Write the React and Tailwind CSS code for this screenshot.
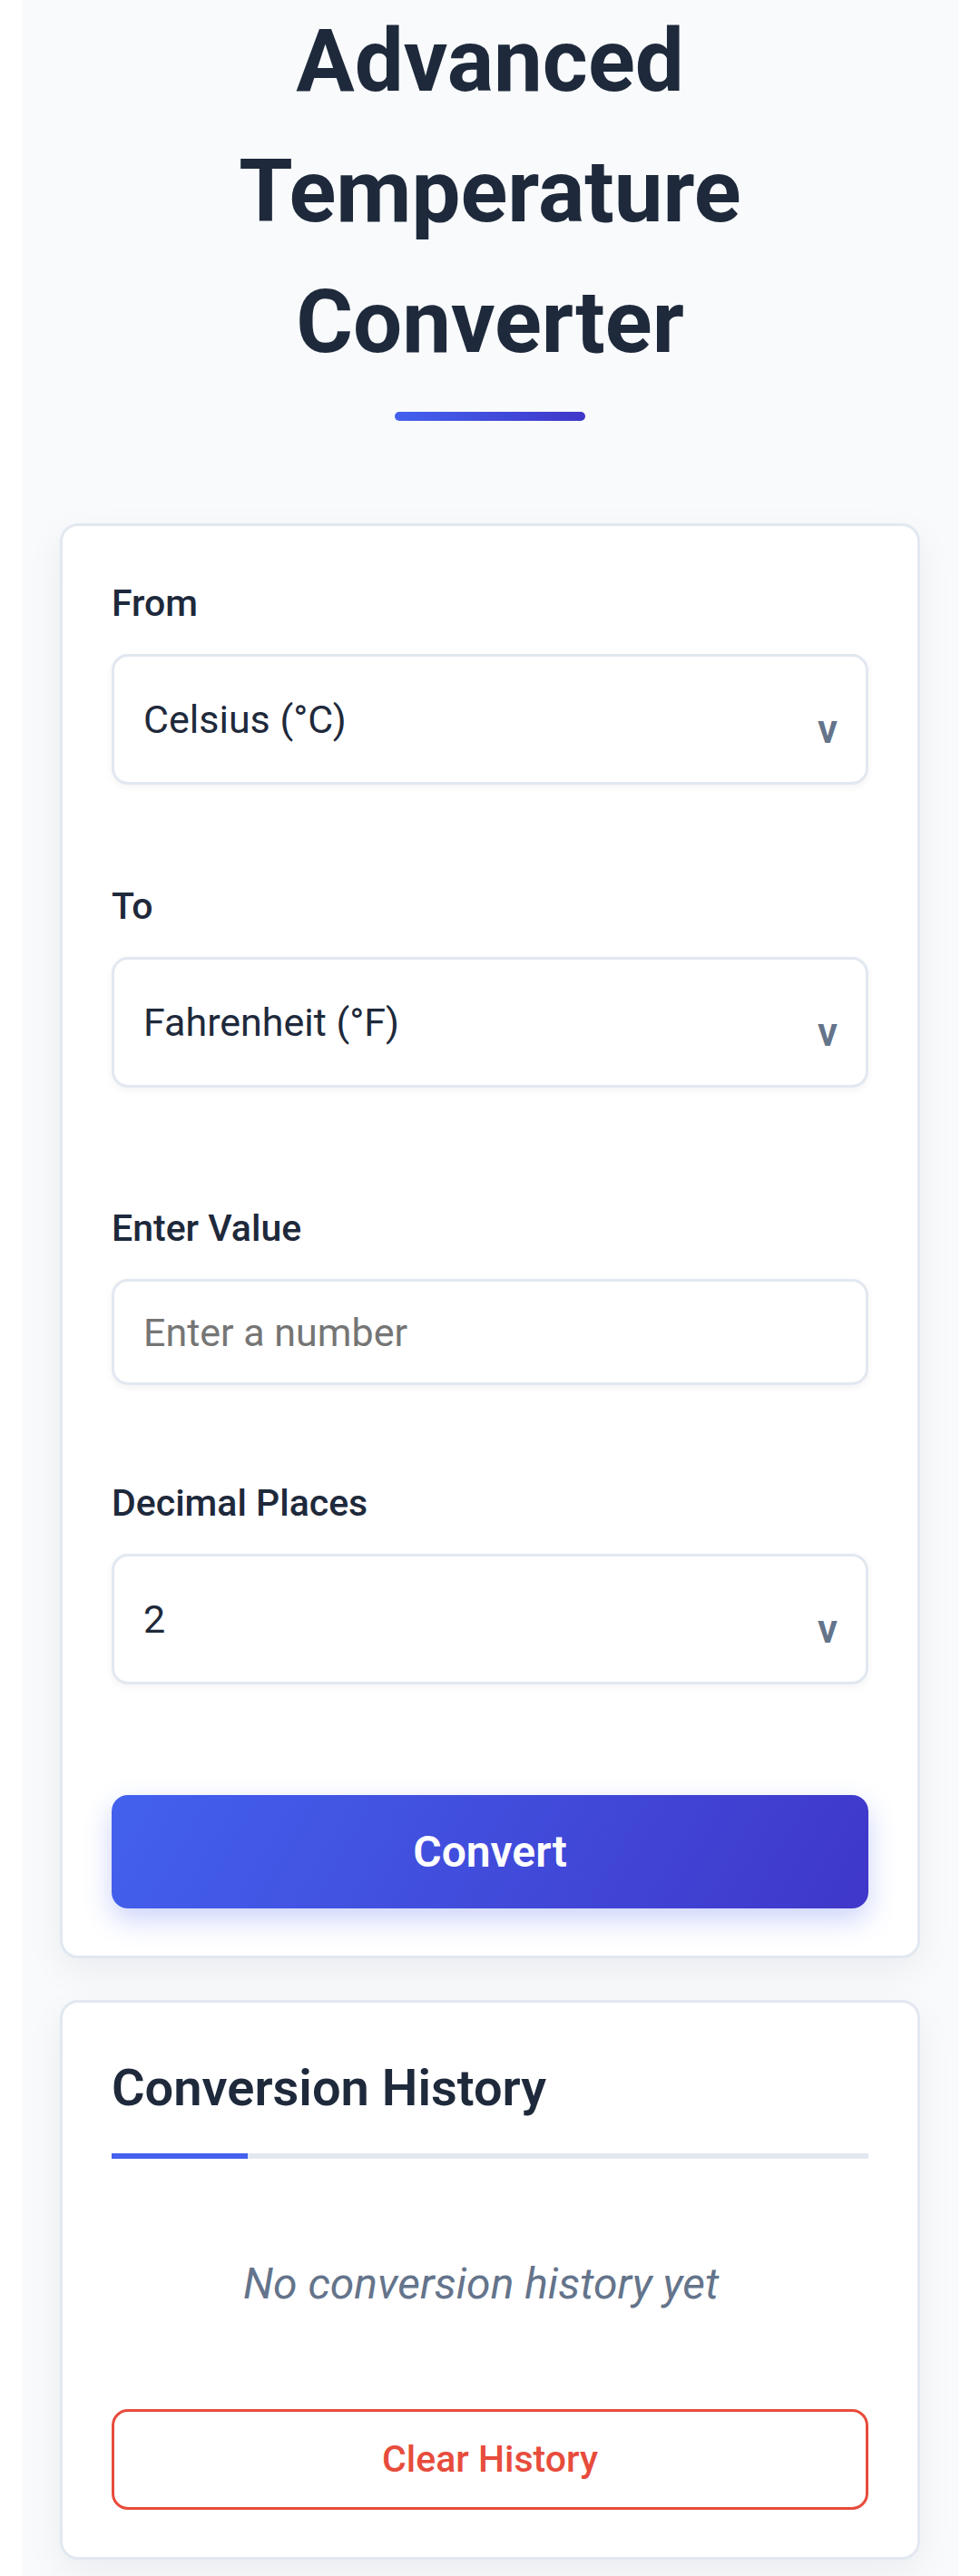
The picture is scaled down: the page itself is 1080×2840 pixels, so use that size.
import { useState } from "react"

const UNITS = ["Celsius (°C)", "Fahrenheit (°F)", "Kelvin (K)", "Rankine (°R)"]

function Field({ label, className = "", children }) {
  return (
    <div className={className}>
      <label className="block mb-[24px] text-[41px] leading-[63px] font-medium text-[#1e293b]">{label}</label>
      {children}
    </div>
  )
}

function Select({ value, onChange, options }) {
  return (
    <div className="relative">
      <select value={value} onChange={e => onChange(e.target.value)}
        className="block w-full h-[144px] appearance-none rounded-[18px] border-[3px] border-[#e2e8f0] bg-white pl-[32px] pr-[90px] text-[43px] text-[#1e293b] shadow-[0_3px_8px_rgba(15,23,42,0.05)] outline-none">
        {options.map(o => <option key={o} value={o}>{o}</option>)}
      </select>
      <span className="pointer-events-none absolute right-[34px] top-[61px] text-[44px] leading-[44px] font-semibold text-[#64748b]">v</span>
    </div>
  )
}

export default function App() {
  const [from, setFrom] = useState(UNITS[0])
  const [to, setTo] = useState(UNITS[1])
  const [value, setValue] = useState("")
  const [decimals, setDecimals] = useState("2")
  const [history, setHistory] = useState([])

  return (
    <div className="min-h-screen bg-white font-['Roboto',sans-serif]">
      <div className="mx-[24px] min-h-[2840px] bg-[#f8fafc] px-[42px] pb-[40px]">
        <h1 className="-mt-[5px] text-center text-[96px] leading-[144px] font-bold text-[#1e293b]">
          Advanced Temperature Converter
        </h1>
        <div className="mx-auto mt-[27px] h-[10px] w-[210px] rounded-full bg-[linear-gradient(90deg,#4361ee,#3f37c9)]" />

        <div className="mt-[113px] rounded-[20px] border-[3px] border-[#e2e8f0] bg-white px-[54px] pt-[54px] pb-[52px] shadow-[0_14px_40px_rgba(15,23,42,0.06)]">
          <Field label="From" className="mb-[103px]">
            <Select value={from} onChange={setFrom} options={UNITS} />
          </Field>
          <Field label="To" className="mb-[124px]">
            <Select value={to} onChange={setTo} options={UNITS} />
          </Field>
          <Field label="Enter Value" className="mb-[99px]">
            <input type="number" value={value} onChange={e => setValue(e.target.value)} placeholder="Enter a number"
              className="block w-full h-[117px] rounded-[18px] border-[3px] border-[#e2e8f0] bg-white px-[32px] text-[43px] text-[#1e293b] placeholder:text-[#757575] shadow-[0_3px_8px_rgba(15,23,42,0.05)] outline-none" />
          </Field>
          <Field label="Decimal Places">
            <Select value={decimals} onChange={setDecimals} options={["0", "1", "2", "3", "4"]} />
          </Field>
          <button
            onClick={() => value !== "" && setHistory([...history, { from, to, value }])}
            className="mt-[122px] block w-full h-[125px] rounded-[18px] bg-[linear-gradient(120deg,#4361ee,#3f37c9)] text-[48px] font-semibold text-white shadow-[0_12px_30px_rgba(67,97,238,0.28)]">
            Convert
          </button>
        </div>

        <div className="mt-[46px] rounded-[20px] border-[3px] border-[#e2e8f0] bg-white px-[54px] pt-[54px] pb-[52px] shadow-[0_14px_40px_rgba(15,23,42,0.06)]">
          <h2 className="text-[56px] leading-[81px] font-semibold text-[#1e293b]">Conversion History</h2>
          <div className="mt-[31px] h-[6px] bg-[#e2e8f0]">
            <div className="h-full w-[150px] bg-[#4361ee]" />
          </div>
          {history.length === 0 ? (
            <p className="mt-[102px] pr-[20px] text-center text-[48px] leading-[72px] italic text-[#64748b]">No conversion history yet</p>
          ) : (
            <ul className="mt-[60px] space-y-4 text-[42px] text-[#1e293b]">
              {history.map((h, i) => <li key={i}>{h.value} {h.from} → {h.to}</li>)}
            </ul>
          )}
          <button onClick={() => setHistory([])}
            className="mt-[102px] block w-full h-[111px] rounded-[18px] border-[3px] border-[#e74c3c] bg-white text-[41px] font-medium text-[#e74c3c]">
            Clear History
          </button>
        </div>
      </div>
    </div>
  )
}
